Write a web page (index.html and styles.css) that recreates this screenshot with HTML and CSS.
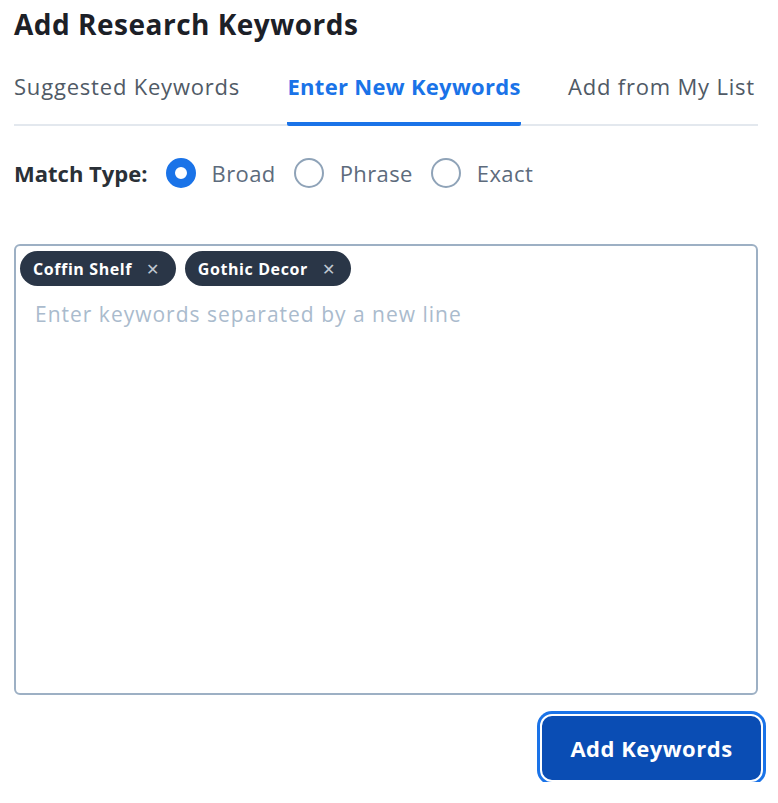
FILE: index.html
```html
<!DOCTYPE html>
<html lang="en">
<head>
    <meta charset="UTF-8">
    <meta name="viewport" content="width=device-width, initial-scale=1.0">
    <title>Add Research Keywords</title>
    <link rel="stylesheet" href="styles.css">
</head>
<body>
    <div class="panel">
        <h1>Add Research Keywords</h1>

        <!-- Tabs -->
        <div class="tabs">
            <span class="tab">Suggested Keywords</span>
            <span class="tab active">Enter New Keywords</span>
            <span class="tab">Add from My List</span>
        </div>

        <!-- Match type -->
        <div class="match-type">
            <span class="match-label">Match Type:</span>
            <label class="radio"><span class="dot checked"></span>Broad</label>
            <label class="radio"><span class="dot"></span>Phrase</label>
            <label class="radio"><span class="dot"></span>Exact</label>
        </div>

        <!-- Keyword box -->
        <div class="keyword-box">
            <div class="chips">
                <span class="chip">Coffin Shelf<span class="chip-x">&#x2715;</span></span>
                <span class="chip">Gothic Decor<span class="chip-x">&#x2715;</span></span>
            </div>
            <div class="placeholder">Enter keywords separated by a new line</div>
        </div>

        <div class="actions">
            <button class="add-btn">Add Keywords</button>
        </div>
    </div>
</body>
</html>
```

FILE: styles.css
```css
body {
    margin: 0;
    background-color: #ffffff;
    font-family: "Open Sans", "Noto Sans", sans-serif;
    color: #2a3647;
}

.panel {
    padding: 8px 20px 0 14px;
}

h1 {
    margin: 0;
    font-size: 28px;
    font-weight: 700;
    letter-spacing: 0.5px;
    color: #1c2027;
    line-height: 32px;
}

.tabs {
    display: flex;
    justify-content: space-between;
    margin-top: 31px;
    border-bottom: 2px solid #e3e8ee;
}

.tab {
    font-size: 22px;
    letter-spacing: 0.8px;
    color: #505a66;
    padding-bottom: 21px;
    margin-bottom: -2px;
    border-bottom: 4px solid transparent;
}

.tab:last-child {
    margin-right: 3px;
}

.tab.active {
    color: #1a73e8;
    font-weight: 700;
    letter-spacing: 0.3px;
    border-bottom-color: #1a73e8;
    border-radius: 2px;
}

.match-type {
    display: flex;
    align-items: center;
    margin-top: 32px;
    font-size: 22px;
}

.match-label {
    font-weight: 700;
    color: #2a3037;
    margin-right: 18px;
}

.radio {
    display: flex;
    align-items: center;
    color: #5d6b7c;
    letter-spacing: 0.4px;
    margin-right: 18px;
}

.dot {
    width: 26px;
    height: 26px;
    border: 2px solid #8fa3b8;
    border-radius: 50%;
    margin-right: 16px;
}

.dot.checked {
    width: 12px;
    height: 12px;
    border: 9px solid #1a73e8;
}

.keyword-box {
    margin-top: 56px;
    height: 437px;
    border: 2px solid #9db0c4;
    border-radius: 6px;
    padding: 5px 4px;
}

.chips {
    display: flex;
    gap: 9px;
}

.chip {
    display: inline-flex;
    align-items: center;
    height: 35px;
    padding: 0 16px 0 13px;
    background-color: #2a3647;
    color: #ffffff;
    border-radius: 18px;
    font-size: 16px;
    font-weight: 700;
    letter-spacing: 0.6px;
}

.chip-x {
    color: #c0c8d2;
    font-weight: 400;
    font-size: 16px;
    margin-left: 14px;
}

.placeholder {
    margin: 14px 0 0 15px;
    font-size: 21px;
    letter-spacing: 1px;
    color: #aabbcd;
}

.actions {
    display: flex;
    justify-content: flex-end;
    margin-top: 19px;
    margin-right: -5px;
}

.add-btn {
    width: 223px;
    height: 68px;
    background-color: #0a4db4;
    color: #ffffff;
    border: 2px solid #ffffff;
    border-radius: 12px;
    box-shadow: 0 0 0 3px #1a73e8;
    font-family: "Open Sans", "Noto Sans", sans-serif;
    font-size: 22px;
    font-weight: 700;
    letter-spacing: 0.5px;
    cursor: pointer;
}
```
